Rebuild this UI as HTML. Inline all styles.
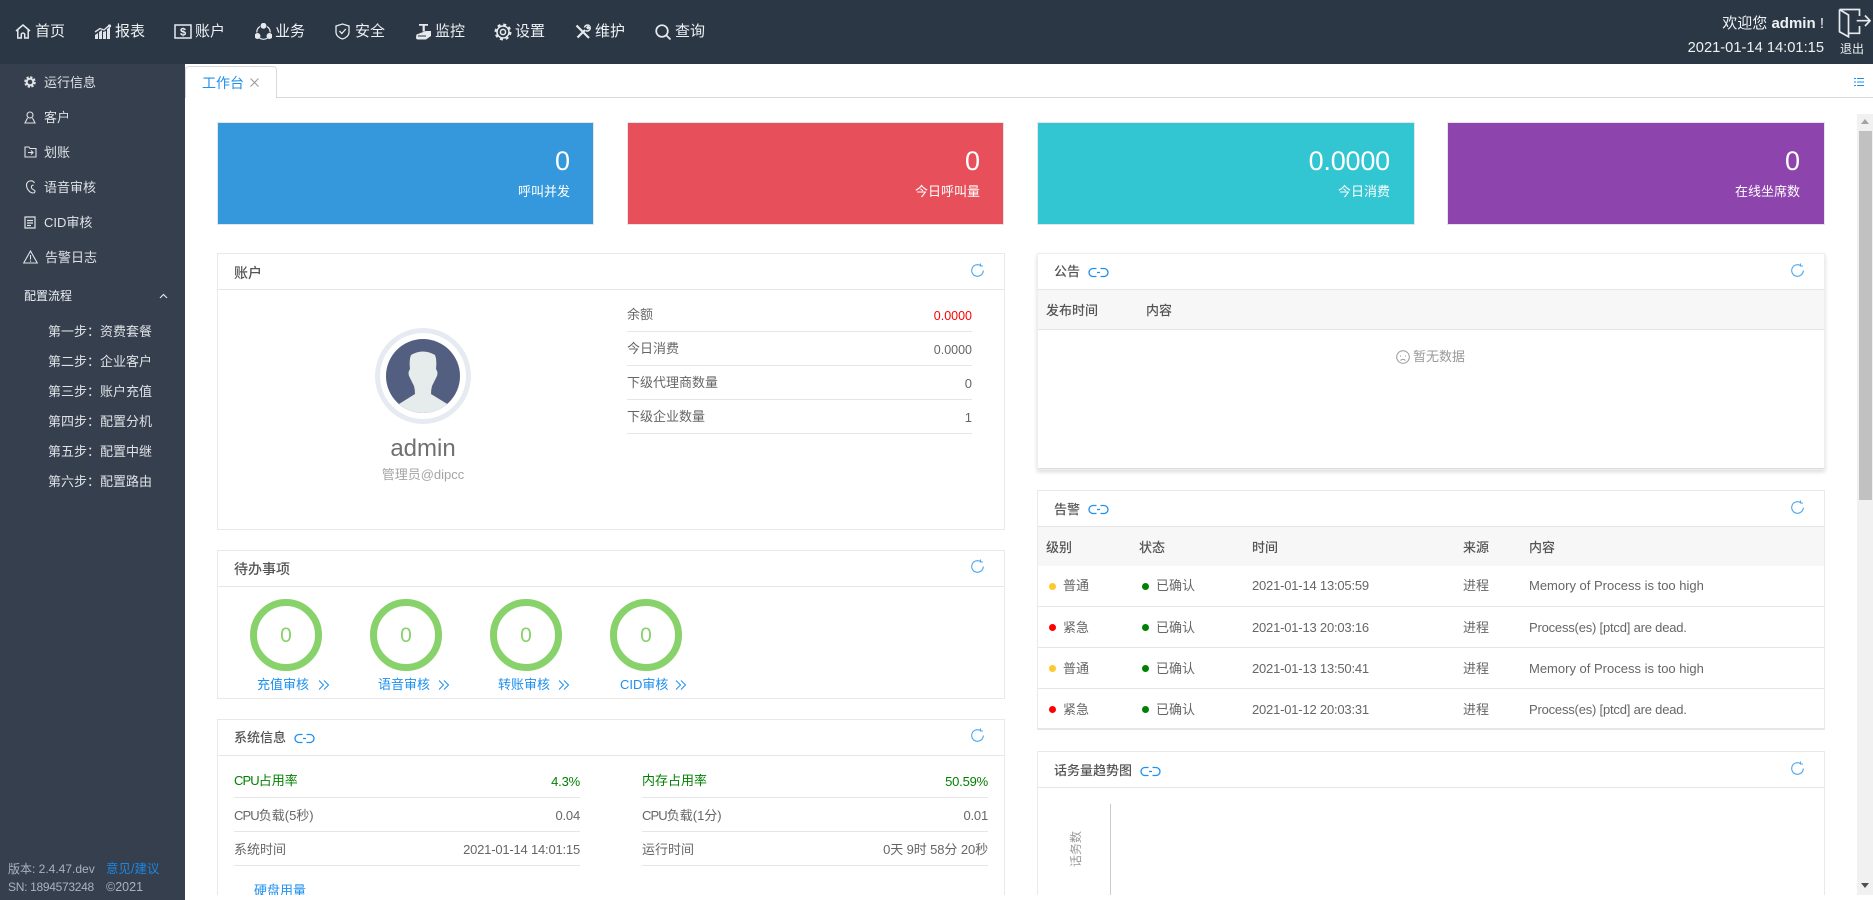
<!DOCTYPE html>
<html lang="zh-CN">
<head>
<meta charset="utf-8">
<title>工作台</title>
<style>
html,body{margin:0;padding:0;width:1873px;height:900px;overflow:hidden;background:#fff}
body{position:relative;font-family:"Liberation Sans","Noto Sans CJK SC",sans-serif;font-size:13px;color:#666}
.a{position:absolute;box-sizing:border-box}
.t{position:absolute;line-height:20px;white-space:nowrap}
.r{text-align:right}
.l{letter-spacing:-.2px}
.u{letter-spacing:-.9px}
#top{left:0;top:0;width:1873px;height:64px;background:#2b3745}
#side{left:0;top:64px;width:185px;height:836px;background:#353f4e}
#top .t{color:#eef1f4}
#top .n{font-size:15px;top:22px}
#side .t{color:#dfe2e6}
#top svg,#side svg{position:absolute}
.p{position:absolute;box-sizing:border-box;border:1px solid #e9e9e9;background:#fff}
.h{position:absolute;height:1px;background:#e6e6e6}
.s{position:absolute;box-sizing:border-box;border:1px solid #e6e6e6;color:#fff}
.ttl{color:#555;font-weight:500}
.g{color:#008000}
.b{color:#1e90ef}
.c{position:absolute;width:72px;height:72px;box-sizing:border-box;border:7px solid #88d26b;border-radius:50%;top:599px;color:#88d26b;font-size:21px;line-height:60px;text-align:center}
.th{position:absolute;background:#f7f7f7}
.d{position:absolute;width:7px;height:7px;border-radius:50%}
</style>
</head>
<body>
<div id="top" class="a">
<svg style="left:15px;top:24px" width="16" height="15" viewBox="0 0 16 15" fill="none" stroke="#e6eaee" stroke-width="1.500"><path d="M1 7 8 1 15 7M2.800 6V14H6.300V10Q8 8 9.700 10V14H13.200V6"/></svg>
<span class="t n" style="left:35px">首页</span>
<svg style="left:94px;top:24px" width="18" height="16" viewBox="0 0 18 16" fill="#dfe4ea"><path d="M1 11 4 9v6H1zM5 8l3-2v9H5zM9 8l3-1v8H9zM13 5l3-2v12h-3z"/><path d="M1 8 6 4.500 10 6 15 1.500" fill="none" stroke="#dfe4ea" stroke-width="1.400"/><circle cx="15.500" cy="2" r="1.600"/></svg>
<span class="t n" style="left:115px">报表</span>
<svg style="left:174px;top:24px" width="18" height="15" viewBox="0 0 18 15" fill="none" stroke="#e6eaee" stroke-width="1.500"><rect x="1" y="1" width="16" height="13"/><text x="9" y="11.500" text-anchor="middle" font-size="11" font-weight="700" fill="#f2f4f6" stroke="none" font-family="Liberation Sans">$</text></svg>
<span class="t n" style="left:195px">账户</span>
<svg style="left:255px;top:23px" width="17" height="17" viewBox="0 0 17 17" fill="none" stroke="#e6eaee" stroke-width="1.300"><path d="M5 3.500A7 7 0 0 0 1.800 9.500M12 3.500A7 7 0 0 1 15.200 9.500M4.500 15a7 7 0 0 0 8 0"/><circle cx="8.500" cy="2.800" r="2.300" fill="#e6eaee"/><circle cx="2.500" cy="13" r="2.300" fill="#e6eaee"/><circle cx="14.500" cy="13" r="2.300" fill="#e6eaee"/></svg>
<span class="t n" style="left:275px">业务</span>
<svg style="left:335px;top:23px" width="15" height="17" viewBox="0 0 15 17" fill="none" stroke="#e6eaee" stroke-width="1.300"><path d="M7.500 1 14 3V9c0 3.500-3 6-6.500 7C4 15 1 12.500 1 9V3zM4.500 8l2.300 2.500 4-4.500"/></svg>
<span class="t n" style="left:355px">安全</span>
<svg style="left:415px;top:23px" width="17" height="17" viewBox="0 0 17 17" fill="#e6eaee"><path d="M4 1h9v1.800H9.800V8.500H7.600V2.800H4z"/><path d="M1.500 11.500 11 8h5v5l-5 3.500H3a2 2 0 0 1-2-2z"/><path d="M3 13H11" stroke="#2b3745" fill="none"/></svg>
<span class="t n" style="left:435px">监控</span>
<svg style="left:494px;top:23px" width="18" height="18" viewBox="0 0 18 18" fill="none" stroke="#e6eaee"><circle cx="9" cy="9" r="6" stroke-width="1.500"/><circle cx="9" cy="9" r="7.500" stroke-width="2" stroke-dasharray="3 2.890"/><circle cx="9" cy="9" r="2.600" stroke-width="1.500"/></svg>
<span class="t n" style="left:515px">设置</span>
<svg style="left:575px;top:24px" width="16" height="16" viewBox="0 0 16 16" fill="none" stroke="#e6eaee" stroke-width="2.200"><path d="M1.500 1.500 4 4 14 14"/><path d="M2.500 13.500 10 6"/><path d="M9.500 3.500a3 3 0 0 1 4.500-2L12 3.500l1 1 2-1.500a3 3 0 0 1-4.500 3.500" stroke-width="1.500"/></svg>
<span class="t n" style="left:595px">维护</span>
<svg style="left:655px;top:24px" width="16" height="16" viewBox="0 0 16 16" fill="none" stroke="#e6eaee" stroke-width="1.700"><circle cx="7" cy="7" r="5.800"/><path d="M11 11 15.500 15.500"/></svg>
<span class="t n" style="left:675px">查询</span>
<span class="t" style="right:49px;top:14px;font-size:15px">欢迎您 <b>admin</b> !</span>
<span class="t" style="right:49px;top:38px;font-size:14.700px">2021-01-14 14:01:15</span>
<svg style="left:1838px;top:8px" width="34" height="30" viewBox="0 0 34 30" fill="none" stroke="#e6eaee" stroke-width="1.700"><path d="M1.500 1.500H21.500V8M21.500 18V25.300H10.500M1.500 1.500V23.700L10.500 28.700V7L1.500 1.500"/><path d="M18.700 12.700H32M27 7.500 32 12.700 27 18"/></svg>
<span class="t" style="left:1840px;top:39px;font-size:12px">退出</span>
</div>

<div id="side" class="a">
<svg style="left:24px;top:12px" width="12" height="12" viewBox="0 0 12 12" fill="none" stroke="#dfe2e6"><circle cx="6" cy="6" r="3.300" stroke-width="2"/><circle cx="6" cy="6" r="4.800" stroke-width="2" stroke-dasharray="2.300 1.470"/></svg>
<span class="t" style="left:44px;top:9px">运行信息</span>
<svg style="left:24px;top:47px" width="12" height="13" viewBox="0 0 12 13" fill="none" stroke="#dfe2e6" stroke-width="1.100"><circle cx="6" cy="4" r="3"/><path d="M3.500 7 1 12H11L8.500 7"/></svg>
<span class="t" style="left:44px;top:44px">客户</span>
<svg style="left:24px;top:82px" width="13" height="12" viewBox="0 0 13 12" fill="none" stroke="#dfe2e6" stroke-width="1.100"><path d="M1 1H5L6 2.500H12V11H1ZM4 6.500H9M7 4.500 9 6.500 7 8.500"/></svg>
<span class="t" style="left:44px;top:79px">划账</span>
<svg style="left:25px;top:116px" width="11" height="14" viewBox="0 0 11 14" fill="none" stroke="#dfe2e6" stroke-width="1.100"><path d="M9.500 3A4.300 4.300 0 0 0 1.500 5C1.500 9 5 13 8 13c1.500 0 2-1 2-2-1-1.500-3-1.500-3.500-3-.5-2 1-3.500 2-2.500"/></svg>
<span class="t" style="left:44px;top:114px">语音审核</span>
<svg style="left:24px;top:152px" width="12" height="13" viewBox="0 0 12 13" fill="none" stroke="#dfe2e6" stroke-width="1.200"><path d="M1 1H11V12H1ZM3 4.500H9M3 7H9M3 9.500H7"/></svg>
<span class="t" style="left:44px;top:149px">CID审核</span>
<svg style="left:23px;top:186px" width="15" height="14" viewBox="0 0 15 14" fill="none" stroke="#dfe2e6" stroke-width="1.100"><path d="M7.500 1 14.300 13H.7ZM7.500 5V9.500M7.500 10.500V11.800"/></svg>
<span class="t" style="left:45px;top:184px">告警日志</span>
<span class="t" style="left:24px;top:222px;font-size:12px;color:#eef1f4">配置流程</span>
<svg style="left:159px;top:229px" width="9" height="6" viewBox="0 0 9 6" fill="none" stroke="#dfe2e6" stroke-width="1.200"><path d="M1 5 4.500 1.500 8 5"/></svg>
<span class="t" style="left:48px;top:258px">第一步：资费套餐</span>
<span class="t" style="left:48px;top:288px">第二步：企业客户</span>
<span class="t" style="left:48px;top:318px">第三步：账户充值</span>
<span class="t" style="left:48px;top:348px">第四步：配置分机</span>
<span class="t" style="left:48px;top:378px">第五步：配置中继</span>
<span class="t" style="left:48px;top:408px">第六步：配置路由</span>
<span class="t" style="left:8px;top:795px;font-size:12px;color:#aab2bd">版本: 2.4.47.dev</span>
<span class="t" style="left:106px;top:795px;font-size:12.500px;color:#1f86e0">意见/建议</span>
<span class="t" style="left:8px;top:813px;font-size:12px;letter-spacing:-.3px;color:#aab2bd">SN: 1894573248</span>
<span class="t" style="left:106px;top:813px;font-size:12.500px;color:#aab2bd">©2021</span>
</div>

<!-- tab bar -->
<div class="h" style="left:185px;top:97px;width:1688px;background:#d9d9d9"></div>
<div class="a" style="left:185px;top:66px;width:92px;height:32px;border:1px solid #d9d9d9;border-bottom:0;border-radius:4px 4px 0 0;background:#fff"></div>
<span class="t" style="left:202px;top:73px;font-size:14px;color:#1e90ef">工作台</span>
<svg class="a" style="left:250px;top:78px" width="9" height="9" viewBox="0 0 9 9" fill="none" stroke="#999"><path d="M.5.500 8.500 8.500M8.500.500.500 8.500"/></svg>
<svg class="a" style="left:1854px;top:77px" width="10" height="10" viewBox="0 0 10 10" stroke="#1e90ef" fill="none"><path d="M3 1.500H10M3 5H10M3 8.500H10M0 1.500H2M0 5H2M0 8.500H2"/></svg>

<!-- scrollbar -->
<div class="a" style="left:1857px;top:114px;width:16px;height:781px;background:#f1f1f1"></div>
<div class="a" style="left:1859px;top:131px;width:13px;height:369px;background:#c1c1c1"></div>
<svg class="a" style="left:1861px;top:118px" width="8" height="6"><path d="M0 6 4 1 8 6z" fill="#a3a3a3"/></svg>
<svg class="a" style="left:1861px;top:883px" width="8" height="6"><path d="M0 0 4 5 8 0z" fill="#505050"/></svg>

<!-- stat cards -->
<div class="s" style="left:217px;top:122px;width:377px;height:103px;background:#3598dc"></div>
<div class="s" style="left:627px;top:122px;width:377px;height:103px;background:#e7505a"></div>
<div class="s" style="left:1037px;top:122px;width:378px;height:103px;background:#32c5d2"></div>
<div class="s" style="left:1447px;top:122px;width:378px;height:103px;background:#8e44ad"></div>
<span class="t r" style="right:1303px;top:151px;font-size:27px;color:#fff">0</span>
<span class="t" style="right:1303px;top:182px;color:#fff">呼叫并发</span>
<span class="t r" style="right:893px;top:151px;font-size:27px;color:#fff">0</span>
<span class="t" style="right:893px;top:182px;color:#fff">今日呼叫量</span>
<span class="t r" style="right:483px;top:151px;font-size:27px;letter-spacing:-.2px;color:#fff">0.0000</span>
<span class="t" style="right:483px;top:182px;color:#fff">今日消费</span>
<span class="t r" style="right:73px;top:151px;font-size:27px;color:#fff">0</span>
<span class="t" style="right:73px;top:182px;color:#fff">在线坐席数</span>

<!-- account -->
<div class="p" style="left:217px;top:253px;width:788px;height:277px"></div>
<div class="h" style="left:218px;top:289px;width:786px"></div>
<span class="t ttl" style="left:234px;top:263px;font-size:14px">账户</span>
<svg class="a" style="left:970px;top:263px" width="15" height="15" viewBox="0 0 15 15" fill="none" stroke="#4aa8ee" stroke-width="1.100"><path d="M10.500 2.500A5.800 5.800 0 1 0 13.300 7.500M10.500 .5V3H13"/></svg>
<svg class="a" style="left:375px;top:328px" width="96" height="96" viewBox="0 0 96 96"><defs><clipPath id="cl"><circle cx="48" cy="48" r="37"/></clipPath></defs><circle cx="48" cy="48" r="45.500" fill="#fff" stroke="#e6ebf1" stroke-width="5"/><circle cx="48" cy="48" r="37" fill="#535f80"/><g clip-path="url(#cl)"><path d="M36 27Q48 20 60 27Q62 32 61 41Q64 45 61 50L57 58Q56 62 56 66L72.300 76V96H24V76L40 66Q40 62 39 58L35 50Q32 45 35 41Q34 32 36 27Z" fill="#e6ebec"/></g></svg>
<span class="t" style="left:323px;width:200px;text-align:center;top:439px;font-size:24px;color:#707070;line-height:20px">admin</span>
<span class="t" style="left:323px;width:200px;text-align:center;top:465px;color:#a5a5a5">管理员@dipcc</span>
<span class="t" style="left:627px;top:305px">余额</span><span class="t" style="right:901px;top:306px;font-size:12.500px;color:#f00">0.0000</span><div class="h" style="left:627px;top:331px;width:345px"></div>
<span class="t" style="left:627px;top:339px">今日消费</span><span class="t" style="right:901px;top:340px;font-size:12.500px">0.0000</span><div class="h" style="left:627px;top:365px;width:345px"></div>
<span class="t" style="left:627px;top:373px">下级代理商数量</span><span class="t" style="right:901px;top:374px">0</span><div class="h" style="left:627px;top:399px;width:345px"></div>
<span class="t" style="left:627px;top:407px">下级企业数量</span><span class="t" style="right:901px;top:408px">1</span><div class="h" style="left:627px;top:433px;width:345px"></div>

<!-- todo -->
<div class="p" style="left:217px;top:550px;width:788px;height:149px"></div>
<div class="h" style="left:218px;top:586px;width:786px"></div>
<span class="t ttl" style="left:234px;top:559px;font-size:14px">待办事项</span>
<svg class="a" style="left:970px;top:559px" width="15" height="15" viewBox="0 0 15 15" fill="none" stroke="#4aa8ee" stroke-width="1.100"><path d="M10.500 2.500A5.800 5.800 0 1 0 13.300 7.500M10.500 .5V3H13"/></svg>
<div class="c" style="left:250px">0</div><div class="c" style="left:370px">0</div><div class="c" style="left:490px">0</div><div class="c" style="left:610px">0</div>
<span class="t b" style="left:257px;top:675px">充值审核</span>
<span class="t b" style="left:378px;top:675px">语音审核</span>
<span class="t b" style="left:498px;top:675px">转账审核</span>
<span class="t b" style="left:620px;top:675px">CID审核</span>
<svg class="a" style="left:318px;top:680px" width="12" height="10" viewBox="0 0 12 10" fill="none" stroke="#1e90ef"><path d="M1 .5 5.500 5 1 9.500M6 .5 10.500 5 6 9.500"/></svg>
<svg class="a" style="left:438px;top:680px" width="12" height="10" viewBox="0 0 12 10" fill="none" stroke="#1e90ef"><path d="M1 .5 5.500 5 1 9.500M6 .5 10.500 5 6 9.500"/></svg>
<svg class="a" style="left:558px;top:680px" width="12" height="10" viewBox="0 0 12 10" fill="none" stroke="#1e90ef"><path d="M1 .5 5.500 5 1 9.500M6 .5 10.500 5 6 9.500"/></svg>
<svg class="a" style="left:675px;top:680px" width="12" height="10" viewBox="0 0 12 10" fill="none" stroke="#1e90ef"><path d="M1 .5 5.500 5 1 9.500M6 .5 10.500 5 6 9.500"/></svg>

<!-- system -->
<div class="a" style="left:0;top:895px;width:1857px;height:5px;background:#fff;z-index:5"></div>
<div class="a" style="left:0;top:895px;width:185px;height:5px;background:#353f4e;z-index:6"></div>
<div class="p" style="left:217px;top:719px;width:788px;height:200px"></div>
<div class="h" style="left:218px;top:755px;width:786px"></div>
<span class="t ttl" style="left:234px;top:728px">系统信息</span>
<svg class="a" style="left:294px;top:733px" width="21" height="11" viewBox="0 0 21 11" fill="none" stroke="#1e90ef" stroke-width="1.300"><path d="M8.500 1.500H5a4 4 0 0 0 0 8H8.500M12.500 1.500H16a4 4 0 0 1 0 8H12.500M9 5.500H12"/></svg>
<svg class="a" style="left:970px;top:728px" width="15" height="15" viewBox="0 0 15 15" fill="none" stroke="#4aa8ee" stroke-width="1.100"><path d="M10.500 2.500A5.800 5.800 0 1 0 13.300 7.500M10.500 .5V3H13"/></svg>
<span class="t g" style="left:234px;top:771px"><span class="u">CPU</span>占用率</span><span class="t g l" style="right:1293px;top:772px">4.3%</span><div class="h" style="left:234px;top:797px;width:346px"></div>
<span class="t" style="left:234px;top:806px"><span class="u">CPU</span>负载(5秒)</span><span class="t l" style="right:1293px;top:806px">0.04</span><div class="h" style="left:234px;top:831px;width:346px"></div>
<span class="t" style="left:234px;top:840px">系统时间</span><span class="t l" style="right:1293px;top:840px">2021-01-14 14:01:15</span><div class="h" style="left:234px;top:865px;width:346px"></div>
<span class="t g" style="left:642px;top:771px">内存占用率</span><span class="t g l" style="right:885px;top:772px">50.59%</span><div class="h" style="left:642px;top:797px;width:346px"></div>
<span class="t" style="left:642px;top:806px"><span class="u">CPU</span>负载(1分)</span><span class="t l" style="right:885px;top:806px">0.01</span><div class="h" style="left:642px;top:831px;width:346px"></div>
<span class="t" style="left:642px;top:840px">运行时间</span><span class="t" style="right:885px;top:840px;letter-spacing:-.1px">0天 9时 58分 20秒</span><div class="h" style="left:642px;top:865px;width:346px"></div>
<span class="t b" style="left:254px;top:881px">硬盘用量</span>

<!-- notice -->
<div class="p" style="left:1037px;top:253px;width:788px;height:217px;border-color:#eee;box-shadow:0 2px 4px rgba(0,0,0,.14)"></div>
<div class="h" style="left:1038px;top:289px;width:786px"></div>
<span class="t ttl" style="left:1054px;top:262px">公告</span>
<svg class="a" style="left:1088px;top:267px" width="21" height="11" viewBox="0 0 21 11" fill="none" stroke="#1e90ef" stroke-width="1.300"><path d="M8.500 1.500H5a4 4 0 0 0 0 8H8.500M12.500 1.500H16a4 4 0 0 1 0 8H12.500M9 5.500H12"/></svg>
<svg class="a" style="left:1790px;top:263px" width="15" height="15" viewBox="0 0 15 15" fill="none" stroke="#4aa8ee" stroke-width="1.100"><path d="M10.500 2.500A5.800 5.800 0 1 0 13.300 7.500M10.500 .5V3H13"/></svg>
<div class="th" style="left:1038px;top:290px;width:786px;height:39px"></div>
<div class="h" style="left:1038px;top:329px;width:786px"></div>
<span class="t ttl" style="left:1046px;top:301px">发布时间</span>
<span class="t ttl" style="left:1146px;top:301px">内容</span>
<svg class="a" style="left:1396px;top:350px" width="14" height="14" viewBox="0 0 14 14" fill="none" stroke="#999"><circle cx="7" cy="7" r="6.300"/><path d="M4.500 10.500Q7 8 9.500 10.500M4.500 5.500V6.500M9.500 5.500V6.500"/></svg>
<span class="t" style="left:1413px;top:347px;color:#999">暂无数据</span>
<div class="h" style="left:1038px;top:468px;width:786px;background:#ddd"></div>

<!-- alarm -->
<div class="p" style="left:1037px;top:490px;width:788px;height:240px"></div>
<div class="h" style="left:1038px;top:526px;width:786px"></div>
<span class="t ttl" style="left:1054px;top:500px">告警</span>
<svg class="a" style="left:1088px;top:504px" width="21" height="11" viewBox="0 0 21 11" fill="none" stroke="#1e90ef" stroke-width="1.300"><path d="M8.500 1.500H5a4 4 0 0 0 0 8H8.500M12.500 1.500H16a4 4 0 0 1 0 8H12.500M9 5.500H12"/></svg>
<svg class="a" style="left:1790px;top:500px" width="15" height="15" viewBox="0 0 15 15" fill="none" stroke="#4aa8ee" stroke-width="1.100"><path d="M10.500 2.500A5.800 5.800 0 1 0 13.300 7.500M10.500 .5V3H13"/></svg>
<div class="th" style="left:1038px;top:527px;width:786px;height:39px"></div>
<span class="t ttl" style="left:1046px;top:538px">级别</span><span class="t ttl" style="left:1139px;top:538px">状态</span><span class="t ttl" style="left:1252px;top:538px">时间</span><span class="t ttl" style="left:1463px;top:538px">来源</span><span class="t ttl" style="left:1529px;top:538px">内容</span>

<div class="d" style="left:1049px;top:583px;background:#ffc82c"></div><span class="t" style="left:1063px;top:576px">普通</span>
<div class="d" style="left:1142px;top:583px;background:#008000"></div><span class="t" style="left:1156px;top:576px">已确认</span>
<span class="t l" style="left:1252px;top:576px">2021-01-14 13:05:59</span><span class="t" style="left:1463px;top:576px">进程</span><span class="t" style="left:1529px;top:576px">Memory of Process is too high</span>
<div class="h" style="left:1038px;top:606px;width:786px"></div>

<div class="d" style="left:1049px;top:624px;background:#f00"></div><span class="t" style="left:1063px;top:618px">紧急</span>
<div class="d" style="left:1142px;top:624px;background:#008000"></div><span class="t" style="left:1156px;top:618px">已确认</span>
<span class="t l" style="left:1252px;top:618px">2021-01-13 20:03:16</span><span class="t" style="left:1463px;top:618px">进程</span><span class="t l" style="left:1529px;top:618px">Process(es) [ptcd] are dead.</span>
<div class="h" style="left:1038px;top:647px;width:786px"></div>

<div class="d" style="left:1049px;top:665px;background:#ffc82c"></div><span class="t" style="left:1063px;top:659px">普通</span>
<div class="d" style="left:1142px;top:665px;background:#008000"></div><span class="t" style="left:1156px;top:659px">已确认</span>
<span class="t l" style="left:1252px;top:659px">2021-01-13 13:50:41</span><span class="t" style="left:1463px;top:659px">进程</span><span class="t" style="left:1529px;top:659px">Memory of Process is too high</span>
<div class="h" style="left:1038px;top:688px;width:786px"></div>

<div class="d" style="left:1049px;top:706px;background:#f00"></div><span class="t" style="left:1063px;top:700px">紧急</span>
<div class="d" style="left:1142px;top:706px;background:#008000"></div><span class="t" style="left:1156px;top:700px">已确认</span>
<span class="t l" style="left:1252px;top:700px">2021-01-12 20:03:31</span><span class="t" style="left:1463px;top:700px">进程</span><span class="t l" style="left:1529px;top:700px">Process(es) [ptcd] are dead.</span>
<div class="h" style="left:1038px;top:728px;width:786px;height:2px"></div>

<!-- chart -->
<div class="p" style="left:1037px;top:751px;width:788px;height:180px"></div>
<div class="h" style="left:1038px;top:787px;width:786px"></div>
<span class="t ttl" style="left:1054px;top:761px">话务量趋势图</span>
<svg class="a" style="left:1140px;top:766px" width="21" height="11" viewBox="0 0 21 11" fill="none" stroke="#1e90ef" stroke-width="1.300"><path d="M8.500 1.500H5a4 4 0 0 0 0 8H8.500M12.500 1.500H16a4 4 0 0 1 0 8H12.500M9 5.500H12"/></svg>
<svg class="a" style="left:1790px;top:761px" width="15" height="15" viewBox="0 0 15 15" fill="none" stroke="#4aa8ee" stroke-width="1.100"><path d="M10.500 2.500A5.800 5.800 0 1 0 13.300 7.500M10.500 .5V3H13"/></svg>
<div class="a" style="left:1110px;top:804px;width:1px;height:91px;background:#ccc"></div>
<span class="t" style="left:1046px;top:839px;width:60px;text-align:center;font-size:12px;color:#999;transform:rotate(-90deg)">话务数</span>
</body>
</html>
